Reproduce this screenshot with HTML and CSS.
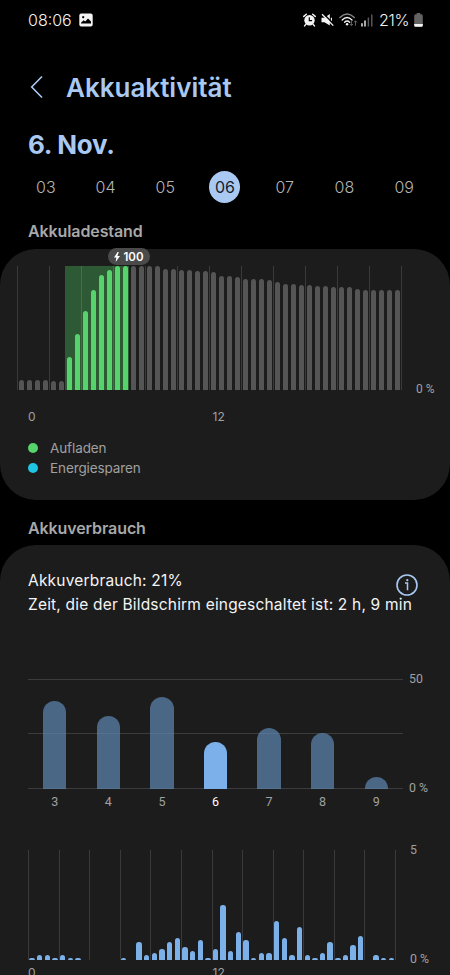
FILE: index.html
```
<!DOCTYPE html>
<html lang="de">
<head>
  <meta charset="UTF-8">
  <title>Akkuaktivität</title>
  <link rel="stylesheet" href="styles.css">
</head>
<body>

  <div class="statusbar">
    <span class="clock">08:06</span>
    <svg class="icon-image" width="14" height="14" viewBox="0 0 14 14">
      <path fill="#f4f4f4" fill-rule="evenodd" d="M2.2 0.5h9.6a1.9 1.9 0 0 1 1.9 1.9v9.2a1.9 1.9 0 0 1-1.9 1.9H2.2a1.9 1.9 0 0 1-1.9-1.9V2.4a1.9 1.9 0 0 1 1.9-1.9zM2 10.4h10V8.6L9 5.6 6.2 8.6 4.6 7.2 2 9.7zM4.2 3a1.1 1.1 0 1 0 0.01 0z"/>
    </svg>
    <div class="status-icons">
      <svg width="13" height="14" viewBox="0 0 13 14">
        <circle cx="6.5" cy="7.2" r="5.2" fill="#f4f4f4"/>
        <path d="M0.8 3.4L3.3 1.3M12.2 3.4L9.7 1.3M2.8 11.4l-1.2 1.5M10.2 11.4l1.2 1.5" stroke="#f4f4f4" stroke-width="1.5" stroke-linecap="round"/>
        <path d="M6.3 4.2v3.4h2.8" fill="none" stroke="#000" stroke-width="1.2"/>
      </svg>
      <svg width="13" height="14" viewBox="0 0 13 14">
        <path d="M0.5 4.8h3L8.8 1v11.4L3.5 9.2h-3z" fill="#f4f4f4"/>
        <path d="M10.4 4.8v4" stroke="#f4f4f4" stroke-width="1.2"/>
        <path d="M2 0.3L13 11.3" stroke="#000" stroke-width="1.5"/>
        <path d="M1 1.3L12.3 12.6" stroke="#f4f4f4" stroke-width="1.3"/>
      </svg>
      <svg class="icon-wifi" width="19" height="14" viewBox="0 0 19 14">
        <g fill="none" stroke-width="1.4" stroke-linecap="round">
          <path d="M0.9 4.4Q8.1-2.4 15.3 4.4" stroke="#858585"/>
          <path d="M3.2 6.9Q8.1 2.3 13 6.9" stroke="#f4f4f4"/>
          <path d="M5.6 9.2Q8.1 7 10.6 9.2" stroke="#f4f4f4"/>
        </g>
        <circle cx="8.1" cy="11.3" r="1.2" fill="#f4f4f4"/>
        <path d="M12.4 7.8v4.8M10.9 11l1.5 1.6 1.5-1.6M16.5 12.6V7.8M15 9.4l1.5-1.6L18 9.4" fill="none" stroke="#666"/>
      </svg>
      <svg class="icon-signal" width="12" height="13" viewBox="0 0 12 13">
        <path d="M1 9.2V12.6M4 6.4V12.6" stroke="#f4f4f4" stroke-width="1.4"/>
        <path d="M7.4 3.6V12.6M10.8 0.4V12.6" stroke="#5c5c5c" stroke-width="1.4"/>
      </svg>
      <span class="battery-text">21%</span>
      <svg class="icon-battery" width="9" height="14" viewBox="0 0 9 14">
        <path d="M2.7 0h3.6v1.2h1A1.5 1.5 0 0 1 8.8 2.7v9.6A1.5 1.5 0 0 1 7.3 13.8H1.7A1.5 1.5 0 0 1 .2 12.3V2.7A1.5 1.5 0 0 1 1.7 1.2h1z" fill="#636363"/>
        <path d="M.2 11h8.6v1.3A1.5 1.5 0 0 1 7.3 13.8H1.7A1.5 1.5 0 0 1 .2 12.3z" fill="#f4f4f4"/>
      </svg>
    </div>
  </div>

  <header>
    <svg class="back" width="14" height="24" viewBox="0 0 14 24">
      <path d="M12 1.5L1.7 12 12 22.5" fill="none" stroke="#a9c9f3" stroke-width="1.6"/>
    </svg>
    <h1>Akkuaktivität</h1>
  </header>

  <h2 class="date">6. Nov.</h2>
  <div class="days">
    <span>03</span>
    <span>04</span>
    <span>05</span>
    <span class="selected">06</span>
    <span>07</span>
    <span>08</span>
    <span>09</span>
  </div>

  <h3 class="section-title">Akkuladestand</h3>
  <div class="card level-card">
    <div class="badge">
      <svg width="6" height="10" viewBox="0 0 6 10"><path d="M3.6 0L0 5.5h2.3L1.7 10 6 4H3.4L4.8 0z" fill="#fff"/></svg>
      100
    </div>
    <div class="row">
      <div class="chart level" id="level"></div>
      <span class="scale">0 %</span>
    </div>
    <div class="hours"><span>0</span><span>12</span></div>
    <ul class="legend">
      <li><i class="dot charging"></i>Aufladen</li>
      <li><i class="dot saving"></i>Energiesparen</li>
    </ul>
  </div>

  <h3 class="section-title usage-title">Akkuverbrauch</h3>
  <div class="card usage-card">
    <div class="summary">
      <p>Akkuverbrauch: 21%<br><span class="screen-time">Zeit, die der Bildschirm eingeschaltet ist: 2 h, 9 min</span></p>
      <svg class="info" width="22" height="22" viewBox="0 0 22 22">
        <circle cx="11" cy="11" r="10" fill="none" stroke="#a9c9f3" stroke-width="1.6"/>
        <path d="M9 9h2.5v7.3" fill="none" stroke="#a9c9f3" stroke-width="1.5"/>
        <circle cx="11.3" cy="6.2" r="1.1" fill="#a9c9f3"/>
      </svg>
    </div>
    <div class="row">
      <div class="chart week" id="week"></div>
      <div class="scales"><span>50</span><span>0 %</span></div>
    </div>
    <div class="week-days">
      <span>3</span><span>4</span><span>5</span><span class="active">6</span><span>7</span><span>8</span><span>9</span>
    </div>
    <div class="row day-row">
      <div class="chart day" id="day"></div>
      <div class="scales day-scales"><span>5</span><span>0 %</span></div>
    </div>
    <div class="hours day-hours"><span>0</span><span>12</span></div>
  </div>

  <script>
    // bar heights in px, one bar per half hour
    const level = [
      10.3, 10.3, 10.3, 10.3, 9.2, 9.2, 33, 56, 79.5, 100.3, 115, 120,
      124, 124, 124, 124, 124, 124, 121, 121, 120, 120, 118.7, 118.7,
      117.7, 114, 114, 112.7, 111.3, 111.3, 111.3, 110, 108, 106.3, 106.3, 105,
      105, 103.7, 103.7, 102.7, 102.7, 102.7, 101.3, 100, 100, 100, 100, 100
    ];
    const week = [88.2, 72.8, 92, 47, 61, 56, 12.5];
    const day = [
      2.5, 4.7, 4.7, 2.5, 4.7, 2.5, 2.5, 0, 0, 0, 0, 0,
      2.5, 0, 17.7, 4.7, 7, 11, 17.7, 22, 13.3, 9, 19.7, 2.5,
      11, 54.7, 9, 28.3, 19.7, 2.5, 7, 7, 39.3, 22, 4.7, 32.7,
      4.7, 2.5, 7, 17.7, 2.5, 4.7, 15.3, 24, 0, 4.7, 2.5, 2.5
    ];

    function draw(id, values, cls) {
      const chart = document.getElementById(id);
      values.forEach(function(h, i) {
        const slot = document.createElement("div");
        slot.className = "slot " + cls(i);
        slot.innerHTML = `<div class="bar" style="height:${h}px"></div>`;
        chart.appendChild(slot);
      });
    }

    const tick = i => i % 4 === 0 ? "tick " : "";
    draw("level", level, i => tick(i) + (i > 5 && i < 14 ? "charge" : ""));
    draw("week", week, i => i === 3 ? "active" : "");
    draw("day", day, tick);
  </script>

</body>
</html>
```
FILE: styles.css
```
* {
  box-sizing: border-box;
}

body {
  margin: 0;
  height: 975px;
  overflow: hidden;
  background: #000;
  color: #f4f4f4;
  font-family: Inter, "Open Sans", sans-serif;
}

h1, h2, h3, p, ul {
  margin: 0;
  padding: 0;
}

.statusbar {
  display: flex;
  align-items: center;
  height: 40px;
  padding: 0 27px 0 28px;
  font-size: 16px;
  font-weight: 300;
}

.clock {
  width: 44px;
}

.icon-image {
  margin-left: 7px;
}

.status-icons {
  display: flex;
  align-items: center;
  margin-left: auto;
}

.status-icons svg {
  flex: none;
  margin-right: 5px;
}

.status-icons .icon-signal {
  margin-right: 6px;
}

.status-icons .icon-wifi {
  margin-right: 3px;
}

.status-icons .icon-battery {
  margin: 0 0 0 3px;
}

.battery-text {
  width: 32px;
  letter-spacing: -0.3px;
}

header {
  display: flex;
  align-items: center;
  height: 94px;
  padding-left: 30px;
}

header h1 {
  margin: 2px 0 0 22px;
  font-size: 26px;
  font-weight: 600;
  line-height: 32px;
  color: #a9c9f3;
}

.date {
  height: 32px;
  margin-top: -6px;
  padding-left: 28px;
  font-size: 26px;
  font-weight: 700;
  letter-spacing: -0.3px;
  line-height: 34px;
  color: #a9c9f3;
}

.days {
  display: grid;
  grid-template-columns: repeat(7, 1fr);
  justify-items: center;
  height: 31px;
  margin: 11px 16px 0;
  font-size: 16px;
  font-weight: 300;
  line-height: 32px;
  color: #b4b4b4;
}

.days .selected {
  width: 31px;
  text-align: center;
  border-radius: 50%;
  background: #a9c9f3;
  color: #14202e;
  font-weight: 400;
}

.section-title {
  height: 20px;
  margin: 19px 0 8px;
  padding-left: 28px;
  font-size: 16px;
  font-weight: 600;
  letter-spacing: -0.1px;
  line-height: 21px;
  color: #a8a8a8;
}

.usage-title {
  margin: 18px 0 7px;
}

.card {
  position: relative;
  background: #1c1c1c;
  border-radius: 36px;
}

.level-card {
  height: 251px;
  padding-top: 17px;
}

.badge {
  position: absolute;
  top: -1px;
  left: 108px;
  z-index: 1;
  display: flex;
  align-items: center;
  justify-content: center;
  gap: 3px;
  width: 42px;
  height: 17px;
  border-radius: 9px;
  background: #4a4a4a;
  color: #fff;
  font-size: 11.5px;
  font-weight: 600;
}

.row {
  display: flex;
}

.chart {
  display: grid;
  flex: none;
}

.slot {
  display: flex;
  align-items: flex-end;
}

.bar {
  width: 5.4px;
  margin-left: 1.3px;
  border-radius: 2.7px 2.7px 0 0;
  background: #555;
}

.tick {
  box-shadow: inset 1px 0 #3a3a3a;
}

.level {
  grid-template-columns: repeat(48, 8px);
  width: 385px;
  height: 124px;
  margin-left: 17px;
  border-right: 1px solid #3a3a3a;
}

.level .bar {
  width: 5px;
  margin-left: 2px;
}

.charge {
  background: #2d5a34;
}

.charge.tick {
  box-shadow: inset 1px 0 #46704c;
}

.charge .bar {
  background: #57d36c;
}

.scale {
  align-self: flex-end;
  height: 8px;
  margin-left: 14px;
  font: 12px/14px Roboto, sans-serif;
  color: #a0a0a0;
}

.hours {
  display: flex;
  gap: 177px;
  margin-top: 19px;
  padding-left: 28px;
  font-size: 12px;
  line-height: 16px;
  color: #a0a0a0;
}

.legend {
  margin-top: 13px;
  padding-left: 28px;
  list-style: none;
  font-size: 13.5px;
  letter-spacing: -0.1px;
  line-height: 20px;
  color: #a0a0a0;
}

.legend li {
  display: flex;
  align-items: center;
  height: 20px;
}

.dot {
  width: 10px;
  height: 10px;
  margin-right: 12px;
  border-radius: 50%;
}

.charging {
  background: #57d36c;
}

.saving {
  background: #1fc6e4;
}

.usage-card {
  height: 470px;
  padding-top: 24px;
}

.summary {
  display: flex;
  height: 110px;
  padding-left: 28px;
  font-size: 15.5px;
  letter-spacing: 0.19px;
  line-height: 23.5px;
  white-space: nowrap;
}

.summary p {
  width: 368px;
}

.info {
  flex: none;
  margin-top: 5px;
}

.week {
  grid-template-columns: repeat(7, 1fr);
  width: 375px;
  height: 110px;
  margin-left: 28px;
  background: linear-gradient(#3c3c3c, #3c3c3c) 0 0 / 100% 1px no-repeat,
    linear-gradient(#3c3c3c, #3c3c3c) 0 54px / 100% 1px no-repeat,
    linear-gradient(#3c3c3c, #3c3c3c) 0 109px / 100% 1px no-repeat;
}

.week .slot {
  justify-content: center;
}

.week .bar {
  width: 23.4px;
  margin: 0;
  border-radius: 12px 12px 0 0;
  background: rgba(95, 136, 179, 0.7);
}

.week .active .bar {
  background: #7cb0ea;
}

.scales {
  display: flex;
  flex-direction: column;
  justify-content: space-between;
  margin: -7px 0 -6px 6px;
  font: 12.3px/14px Roboto, sans-serif;
  color: #a0a0a0;
}

.week-days {
  display: grid;
  grid-template-columns: repeat(7, 1fr);
  width: 375px;
  margin: 6px 0 0 28px;
  font: 12.5px/14px Roboto, sans-serif;
  text-align: center;
  color: #a0a0a0;
}

.week-days .active {
  color: #fff;
}

.day-row {
  margin-top: 41px;
}

.day {
  grid-template-columns: repeat(48, 1fr);
  width: 368px;
  height: 110px;
  margin-left: 28px;
  border-right: 1px solid #3a3a3a;
}

.day .bar {
  background: #7cb0e8;
}

.day-scales {
  margin-left: 14px;
}

.day-hours {
  margin-top: 5px;
}
```
